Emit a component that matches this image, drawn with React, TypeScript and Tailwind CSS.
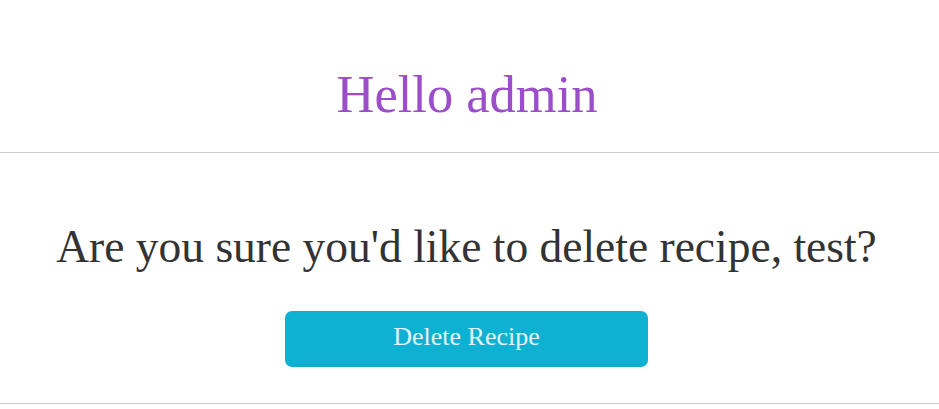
import React from "react";

export default function App() {
  return (
    <div
      className="w-[939px] h-[409px] bg-white text-[#333333] overflow-hidden"
      style={{ fontFamily: '"Liberation Serif", serif' }}
    >
      <header className="h-[153px] border-b border-[#cccccc] pt-[68px] pr-[5px]">
        <h1 className="text-center text-[52.5px] leading-none font-normal text-[#9b4dca]">
          Hello admin
        </h1>
      </header>
      <section className="h-[251px] border-b border-[#cccccc] pt-[71px] pr-[6px] flex flex-col items-center">
        <p className="text-center text-[45.5px] leading-none">
          Are you sure you'd like to delete recipe, test?
        </p>
        <button className="mt-[41px] w-[363px] h-[56px] rounded-[7px] bg-[#0fb1d3] text-[#e3f6f9] text-[26px] leading-none flex items-center justify-center pb-[3px]">
          Delete Recipe
        </button>
      </section>
    </div>
  );
}
